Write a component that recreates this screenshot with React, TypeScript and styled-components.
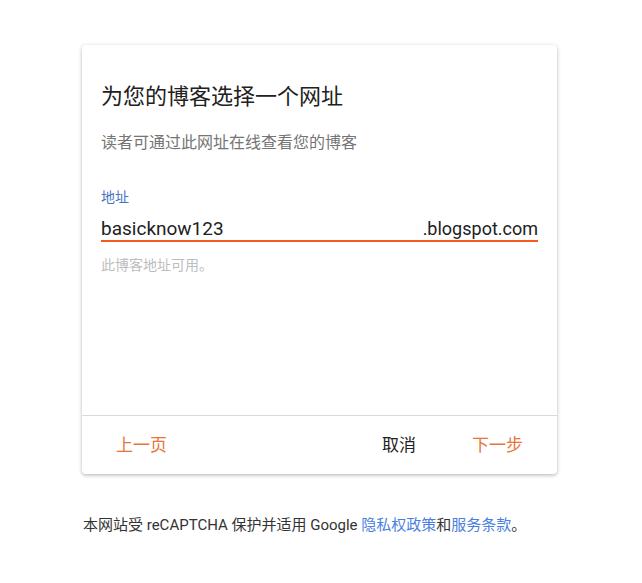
import React from "react";
import styled, { createGlobalStyle } from "styled-components";

const GlobalStyle = createGlobalStyle`
  html, body { margin: 0; padding: 0; background: #fff; }
  body { font-family: Roboto, "Noto Sans CJK SC", sans-serif; }
`;

const Page = styled.div`
  padding: 45px 0 0 82px;
  width: 475px;
`;

const Card = styled.div`
  width: 475px;
  height: 429px;
  box-sizing: border-box;
  background: #fff;
  border-radius: 4px;
  box-shadow: 0 1px 4px rgba(0, 0, 0, 0.22), 0 2px 3px rgba(0, 0, 0, 0.08);
  display: flex;
  flex-direction: column;
`;

const Body = styled.div`
  flex: 1;
  padding: 38px 19px 0 19px;
  display: flex;
  flex-direction: column;
`;

const Title = styled.h2`
  margin: 0;
  font-family: Roboto, "Noto Sans CJK SC", sans-serif;
  font-weight: 400;
  font-size: 22px;
  line-height: 28px;
  color: #212121;
`;

const Subtitle = styled.p`
  margin: 22px 0 0 0;
  font-size: 16px;
  line-height: 20px;
  color: #757575;
`;

const Label = styled.label`
  margin-top: 35px;
  font-size: 14px;
  line-height: 18px;
  color: #4a72c0;
`;

const InputRow = styled.div`
  margin-top: 11px;
  display: flex;
  justify-content: space-between;
  align-items: center;
  height: 23px;
  border-bottom: 2px solid #f35a1c;
  color: #212121;
`;

const Value = styled.span`
  font-size: 19px;
`;

const Suffix = styled.span`
  font-size: 18px;
`;

const Helper = styled.div`
  margin-top: 15px;
  font-size: 14px;
  line-height: 16px;
  color: #bdbdbd;
`;

const Footer = styled.div`
  height: 59px;
  box-sizing: border-box;
  border-top: 1px solid #dadada;
  display: flex;
  align-items: center;
  padding: 0 18px 3px 18px;
  gap: 24px;
`;

const Button = styled.button<{ $accent?: boolean; $push?: boolean }>`
  border: none;
  background: transparent;
  padding: 0 16px;
  height: 36px;
  font-family: Roboto, "Noto Sans CJK SC", sans-serif;
  font-size: 17px;
  color: ${(p) => (p.$accent ? "#e8743b" : "#212121")};
  margin-left: ${(p) => (p.$push ? "auto" : "0")};
  cursor: pointer;
`;

const Notice = styled.p`
  margin: 41px 0 0 1px;
  font-size: 15px;
  line-height: 20px;
  color: #333;
  white-space: nowrap;
`;

const Link = styled.a`
  color: #4a7fe0;
  text-decoration: none;
`;

export default function App() {
  return (
    <>
      <GlobalStyle />
      <Page>
        <Card>
          <Body>
            <Title>为您的博客选择一个网址</Title>
            <Subtitle>读者可通过此网址在线查看您的博客</Subtitle>
            <Label>地址</Label>
            <InputRow>
              <Value>basicknow123</Value>
              <Suffix>.blogspot.com</Suffix>
            </InputRow>
            <Helper>此博客地址可用。</Helper>
          </Body>
          <Footer>
            <Button $accent>上一页</Button>
            <Button $push>取消</Button>
            <Button $accent>下一步</Button>
          </Footer>
        </Card>
        <Notice>
          本网站受 reCAPTCHA 保护并适用 Google <Link href="#">隐私权政策</Link>和<Link href="#">服务条款</Link>。
        </Notice>
      </Page>
    </>
  );
}
